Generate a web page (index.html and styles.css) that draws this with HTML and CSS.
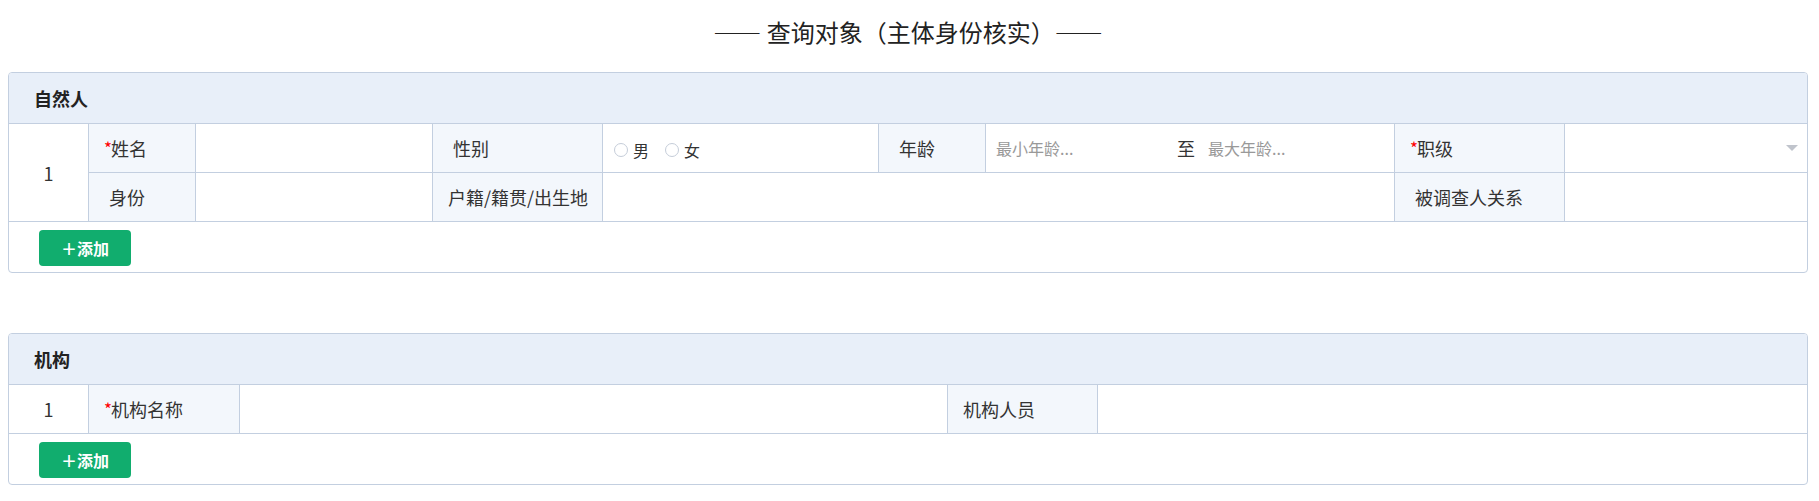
FILE: index.html
```html
<!DOCTYPE html>
<html lang="zh-CN">
<head>
<meta charset="utf-8">
<title>查询对象（主体身份核实）</title>
<link rel="stylesheet" href="styles.css">
</head>
<body>
<div class="page">
  <h2 class="title">—— 查询对象（主体身份核实）——</h2>

  <section class="panel">
    <div class="panel-head">自然人</div>
    <div class="grid grid-person">
      <div class="cell idx rows2">1</div>
      <div class="cell label"><span class="req">*</span>姓名</div>
      <div class="cell value"></div>
      <div class="cell label indent">性别</div>
      <div class="cell value radios">
        <label class="radio"><span class="dot"></span>男</label>
        <label class="radio"><span class="dot"></span>女</label>
      </div>
      <div class="cell label indent">年龄</div>
      <div class="cell value age">
        <span class="ph ph-min">最小年龄...</span>
        <span class="to">至</span>
        <span class="ph">最大年龄...</span>
      </div>
      <div class="cell label"><span class="req">*</span>职级</div>
      <div class="cell value select"><span class="caret"></span></div>

      <div class="cell label indent">身份</div>
      <div class="cell value"></div>
      <div class="cell label">户籍/籍贯/出生地</div>
      <div class="cell value cols3"></div>
      <div class="cell label indent">被调查人关系</div>
      <div class="cell value"></div>
    </div>
    <div class="panel-foot"><button class="btn-add" type="button">＋添加</button></div>
  </section>

  <section class="panel panel-org">
    <div class="panel-head">机构</div>
    <div class="grid grid-org">
      <div class="cell idx">1</div>
      <div class="cell label"><span class="req">*</span>机构名称</div>
      <div class="cell value"></div>
      <div class="cell label">机构人员</div>
      <div class="cell value"></div>
    </div>
    <div class="panel-foot"><button class="btn-add" type="button">＋添加</button></div>
  </section>
</div>
</body>
</html>
```

FILE: styles.css
```css
* {
  box-sizing: border-box;
}

html, body {
  margin: 0;
  padding: 0;
  background: #ffffff;
}

body {
  font-family: "Noto Sans CJK SC", "Noto Sans", sans-serif;
  color: #333333;
}

.page {
  padding: 0 11px 0 8px;
}

.title {
  margin: 0;
  height: 72px;
  line-height: 64px;
  text-align: center;
  font-size: 24px;
  font-weight: 400;
  color: #222222;
}

.panel {
  border: 1px solid #c3cfe0;
  border-radius: 4px;
  overflow: hidden;
  background: #ffffff;
}

.panel-org {
  margin-top: 60px;
}

.panel-head {
  height: 51px;
  border-bottom: 1px solid #c3cfe0;
  background: #e8eff9;
  display: flex;
  align-items: center;
  padding-left: 25px;
  font-size: 18px;
  font-weight: 700;
  color: #222222;
}

.grid {
  display: grid;
  gap: 1px;
  background: #c3cfe0;
  border-bottom: 1px solid #c3cfe0;
  grid-auto-rows: 48px;
}

.grid-person {
  grid-template-columns: 79px 106px 236px 169px 275px 106px 408px 169px 1fr;
}

.grid-org {
  grid-template-columns: 79px 150px 707px 149px 1fr;
}

.cell {
  background: #ffffff;
  display: flex;
  align-items: center;
  font-size: 18px;
  color: #333333;
  white-space: nowrap;
}

.idx {
  justify-content: center;
}

.rows2 {
  grid-row: span 2;
}

.cols3 {
  grid-column: span 3;
}

.label {
  background: #f3f7fc;
  padding-left: 15px;
}

.label.indent {
  padding-left: 20px;
}

.req {
  color: #ff0000;
  font-size: 17px;
  line-height: 1;
  width: 7px;
  margin-top: -2px;
}

.radios {
  padding: 4px 0 0 11px;
  font-size: 16px;
}

.radio {
  display: flex;
  align-items: center;
  margin-right: 16px;
}

.dot {
  width: 14px;
  height: 14px;
  border: 1px solid #c5cdd9;
  border-radius: 50%;
  background: #ffffff;
  margin-right: 5px;
}

.age {
  padding-left: 10px;
}

.ph {
  font-size: 16px;
  color: #999999;
}

.ph-min {
  width: 181px;
}

.to {
  width: 31px;
  font-size: 18px;
  color: #333333;
}

.select {
  justify-content: flex-end;
  padding-right: 9px;
}

.caret {
  width: 0;
  height: 0;
  border-left: 6px solid transparent;
  border-right: 6px solid transparent;
  border-top: 6px solid #c0c4cc;
}

.panel-foot {
  height: 50px;
  padding: 8px 0 0 30px;
}

.btn-add {
  width: 92px;
  height: 36px;
  border: none;
  border-radius: 4px;
  background: #11ad6e;
  color: #ffffff;
  font-family: "Noto Sans CJK SC", "Noto Sans", sans-serif;
  font-size: 16px;
  font-weight: 700;
  padding: 0;
  cursor: pointer;
}
```
